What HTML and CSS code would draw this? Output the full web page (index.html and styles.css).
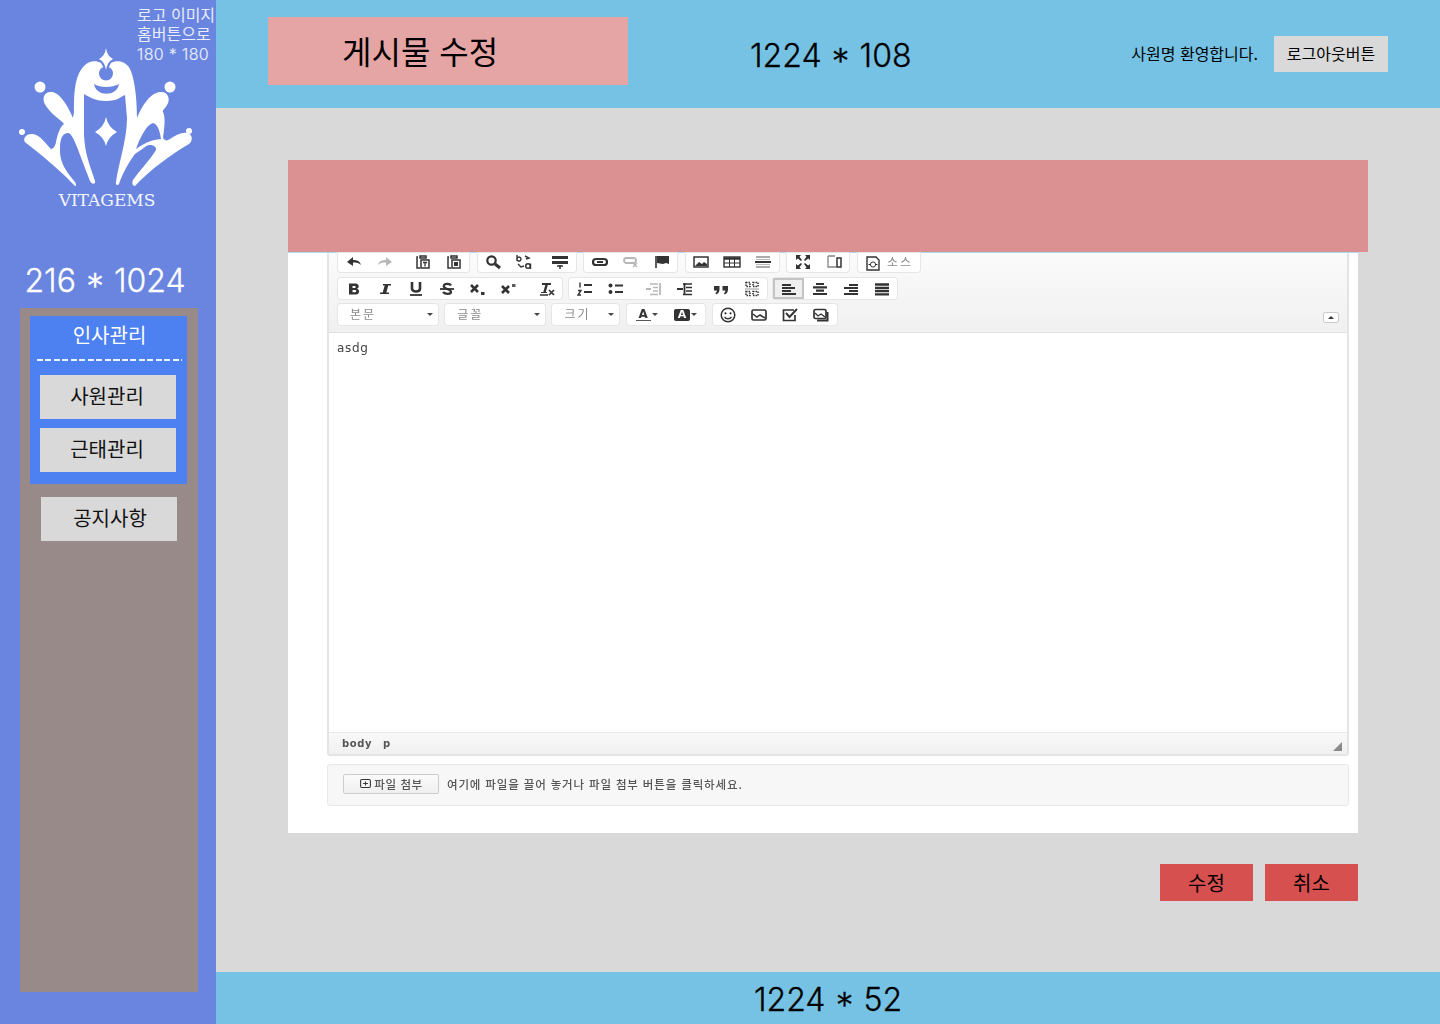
FILE: index.html
```html
<!DOCTYPE html>
<html lang="ko">
<head>
<meta charset="utf-8">
<title>게시물 수정</title>
<link rel="stylesheet" href="styles.css">
</head>
<body>
<svg class="sprite" xmlns="http://www.w3.org/2000/svg">
  <symbol id="i-undo" viewBox="0 0 16 16"><path d="M1 8l6-5v3c4 0 7 1 8 5-2-2-4-2.500-8-2.500V12z" fill="currentColor"/></symbol>
  <symbol id="i-redo" viewBox="0 0 16 16"><path d="M15 8L9 3v3C5 6 2 7 1 11c2-2 4-2.500 8-2.500V12z" fill="currentColor"/></symbol>
  <symbol id="i-paste" viewBox="0 0 16 16"><path d="M3 3H2v11h3M5 2h6v2H5zM6 6h8v8H6z" fill="none" stroke="currentColor" stroke-width="1.500"/><path d="M8 8.500h4M10 8.500v4" stroke="currentColor" stroke-width="1.300"/></symbol>
  <symbol id="i-paste2" viewBox="0 0 16 16"><path d="M3 3H2v11h3M5 2h6v2H5zM6 6h8v8H6z" fill="none" stroke="currentColor" stroke-width="1.500"/><path d="M8 8h4v4H8z" fill="currentColor"/></symbol>
  <symbol id="i-find" viewBox="0 0 16 16"><circle cx="6.500" cy="6.500" r="4.200" fill="none" stroke="currentColor" stroke-width="2.200"/><path d="M10 10l5 4" stroke="currentColor" stroke-width="3"/></symbol>
  <symbol id="i-replace" viewBox="0 0 16 16"><path d="M1 1v6M1 5a2 2 0 1 1 0 .1M9 2l4 2-3 1M2 10l3 3 3-1" fill="none" stroke="currentColor" stroke-width="1.400"/><circle cx="12" cy="12" r="2.300" fill="none" stroke="currentColor" stroke-width="1.500"/><path d="M14.500 9.500V15" stroke="currentColor" stroke-width="1.400"/></symbol>
  <symbol id="i-select" viewBox="0 0 16 16"><path d="M0 2h16v3H0zM0 7h16v3H0z" fill="currentColor"/><path d="M5 12h6M8 11v4" stroke="currentColor" stroke-width="1.500"/></symbol>
  <symbol id="i-link" viewBox="0 0 16 16"><rect x="1" y="5" width="14" height="6" rx="3" fill="none" stroke="currentColor" stroke-width="2.200"/><path d="M5 8h6" stroke="currentColor" stroke-width="2"/></symbol>
  <symbol id="i-unlink" viewBox="0 0 16 16"><rect x="1" y="4" width="12" height="5" rx="2.500" fill="none" stroke="currentColor" stroke-width="1.800"/><path d="M10 9l4 4M14 9l-4 4" stroke="currentColor" stroke-width="1.500"/></symbol>
  <symbol id="i-flag" viewBox="0 0 16 16"><path d="M2 2v12" stroke="currentColor" stroke-width="1.600"/><path d="M3 2h12v8l-3-1-3 1-6-1z" fill="currentColor"/></symbol>
  <symbol id="i-image" viewBox="0 0 16 16"><rect x="1" y="3" width="14" height="10" fill="none" stroke="currentColor" stroke-width="1.500"/><path d="M2 12l4-4 3 2 2-2 3 2v2z" fill="currentColor"/></symbol>
  <symbol id="i-table" viewBox="0 0 18 16" preserveAspectRatio="none"><rect x="1" y="3" width="16" height="10" fill="none" stroke="currentColor" stroke-width="1.400"/><path d="M1 4.500h16" stroke="currentColor" stroke-width="2.500"/><path d="M1 9h16M6.500 3v10M11.500 3v10" stroke="currentColor"/></symbol>
  <symbol id="i-hr" viewBox="0 0 16 16"><path d="M1 3h14M1 13h14" stroke="currentColor" stroke-opacity=".55" stroke-width="1.500"/><path d="M0 8h16" stroke="currentColor" stroke-width="2"/><path d="M1 5.500h14M1 10.500h14" stroke="currentColor" stroke-opacity=".35"/></symbol>
  <symbol id="i-max" viewBox="0 0 16 16"><path d="M1 1h5L4.500 2.800 7 6 6 7 2.800 4.500 1 6zM15 1v5l-1.800-1.500L10 7 9 6l2.500-3.200L10 1zM1 15v-5l1.800 1.500L6 9l1 1-2.500 3.200L6 15zM15 15h-5l1.500-1.800L9 10l1-1 3.200 2.500L15 10z" fill="currentColor"/></symbol>
  <symbol id="i-blocks" viewBox="0 0 16 16"><path d="M2 2h7M2 2v11h8" fill="none" stroke="currentColor" stroke-opacity=".6" stroke-width="1.300"/><rect x="11" y="4" width="4" height="9" fill="none" stroke="currentColor" stroke-width="1.500"/></symbol>
  <symbol id="i-source" viewBox="0 0 16 16"><path d="M2 2h9l3 3v10H2z" fill="none" stroke="currentColor" stroke-width="1.400"/><circle cx="8" cy="9.500" r="2.600" fill="none" stroke="currentColor"/><path d="M3.500 9.500H6M10 9.500h2.500" stroke="currentColor"/></symbol>
  <symbol id="i-b" viewBox="0 0 16 16"><path d="M3 2.500h6.500c4 0 4 4.500 1.500 5.300 3 .7 3 5.700-1.300 5.700H3zM6.500 5v2h2.300c1.200 0 1.200-2 0-2zM6.500 9v2.200h2.800c1.300 0 1.300-2.200 0-2.200z" fill="currentColor" fill-rule="evenodd"/></symbol>
  <symbol id="i-i" viewBox="0 0 16 16"><path d="M6 3h8v1.500h-2.700l-2 7H12V13H3v-1.500h2.700l2-7H6z" fill="currentColor"/></symbol>
  <symbol id="i-u" viewBox="0 0 16 16"><path d="M4 1v6.500c0 4 8 4 8 0V1" fill="none" stroke="currentColor" stroke-width="2.600"/><path d="M2 14h12" stroke="currentColor" stroke-width="1.800"/></symbol>
  <symbol id="i-s" viewBox="0 0 16 16"><path d="M12 4.500C11 2.500 5 2 4.800 5.300 4.500 8 12 8 12 11c0 2.500-6 2.500-8 0" fill="none" stroke="currentColor" stroke-width="2.300"/><path d="M1 8h14" stroke="currentColor" stroke-width="1.800"/></symbol>
  <symbol id="i-sub" viewBox="0 0 16 16"><path d="M1 4l7 7M8 4l-7 7" stroke="currentColor" stroke-width="2.600"/><path d="M11 11h3.500v3H11z" fill="currentColor"/></symbol>
  <symbol id="i-sup" viewBox="0 0 16 16"><path d="M1 5l7 7M8 5l-7 7" stroke="currentColor" stroke-width="2.600"/><path d="M11 3h3.500v3H11z" fill="currentColor" fill-opacity=".8"/></symbol>
  <symbol id="i-tx" viewBox="0 0 16 16"><path d="M3 2h9v2H8.800L6.800 11H8v1H2v-1h2.300l2-7H3z" fill="currentColor"/><path d="M1 14h8" stroke="currentColor" stroke-width="1.500"/><path d="M10 9l5 5M15 9l-5 5" stroke="currentColor" stroke-width="1.700"/></symbol>
  <symbol id="i-ol" viewBox="0 0 16 16"><path d="M3 1.500v5M1 9.500h3l-3 4.500h3" fill="none" stroke="currentColor" stroke-width="1.400"/><path d="M7 4h8M7 11h8" stroke="currentColor" stroke-width="2.200"/></symbol>
  <symbol id="i-ul" viewBox="0 0 16 16"><circle cx="2.500" cy="4.500" r="2" fill="currentColor"/><circle cx="2.500" cy="11" r="2" fill="currentColor"/><path d="M7 4.500h8M7 11h8" stroke="currentColor" stroke-width="2.200"/></symbol>
  <symbol id="i-out" viewBox="0 0 16 16"><path d="M4 3h8M7 6.500h5M7 10h5M4 13.500h8" stroke="currentColor" stroke-width="1.600"/><path d="M0 8h5M14 2v12" stroke="currentColor" stroke-width="1.800"/></symbol>
  <symbol id="i-in" viewBox="0 0 16 16"><path d="M6 3h9M9 6.500h6M9 10h6M6 13.500h9" stroke="currentColor" stroke-width="1.600"/><path d="M0 8h6M7.500 2v12" stroke="currentColor" stroke-width="1.800"/></symbol>
  <symbol id="i-quote" viewBox="0 0 16 16"><path d="M1 5h5.500v3.500C6.500 11 5 13 3 13.500L2.500 12c1-.5 1.300-1.500 1.300-2.500H1zM9.500 5H15v3.500c0 2.500-1.500 4.500-3.500 5L11 12c1-.5 1.300-1.500 1.300-2.500H9.500z" fill="currentColor"/></symbol>
  <symbol id="i-div" viewBox="0 0 16 16"><path d="M2 1.500h4v4H2zM9 1.500h5v4H9zM2 10.500h4v4H2zM9 10.500h5v4H9z" fill="none" stroke="currentColor" stroke-dasharray="1.500 1" stroke-width="1.500"/><path d="M1 8h14" stroke="currentColor" stroke-opacity=".5"/></symbol>
  <symbol id="i-left" viewBox="0 0 16 16"><path d="M1 4h9M1 7h13M1 10h9M1 13h14" stroke="currentColor" stroke-width="2.200"/></symbol>
  <symbol id="i-center" viewBox="0 0 16 16"><path d="M4 3h8M1 6.300h14M4 9.700h8M1 13h14" stroke="currentColor" stroke-width="2.200"/></symbol>
  <symbol id="i-right" viewBox="0 0 16 16"><path d="M6 4h9M1 7h14M6 10h9M1 13h14" stroke="currentColor" stroke-width="2.200"/></symbol>
  <symbol id="i-just" viewBox="0 0 16 16"><path d="M1 3.500h14M1 6.800h14M1 10h14M1 13.300h14" stroke="currentColor" stroke-width="2.300"/></symbol>
  <symbol id="i-smile" viewBox="0 0 16 16"><circle cx="8" cy="8" r="6.800" fill="none" stroke="currentColor" stroke-width="1.500"/><circle cx="5.500" cy="6.300" r="1.100" fill="currentColor"/><circle cx="10.500" cy="6.300" r="1.100" fill="currentColor"/><path d="M4.500 9.800c1.500 2.500 5.500 2.500 7 0" fill="none" stroke="currentColor" stroke-width="1.400"/></symbol>
  <symbol id="i-pic" viewBox="0 0 16 16"><rect x="1" y="3" width="14" height="10" rx="1.500" fill="none" stroke="currentColor" stroke-width="1.700"/><path d="M2 7l4 3 3-2 5 3" fill="none" stroke="currentColor" stroke-width="1.500"/></symbol>
  <symbol id="i-check" viewBox="0 0 16 16"><path d="M13 8v5.500H1.500V3H12" fill="none" stroke="currentColor" stroke-width="1.700"/><path d="M4 6l3.500 4L15 2" fill="none" stroke="currentColor" stroke-width="1.900"/></symbol>
  <symbol id="i-gal" viewBox="0 0 16 16"><rect x="1" y="2.500" width="12" height="9" rx="1.500" fill="none" stroke="currentColor" stroke-width="1.700"/><path d="M2 6l3 3 3-2 4 3" fill="none" stroke="currentColor" stroke-width="1.300"/><path d="M14.500 5v8.500H4" fill="none" stroke="currentColor" stroke-width="2"/></symbol>
  <symbol id="i-clip" viewBox="0 0 16 16"><rect x="2" y="3" width="12" height="10" rx="1.500" fill="none" stroke="currentColor" stroke-width="1.300"/><path d="M5 8h6M8 5.500v5" stroke="currentColor" stroke-width="1.200"/></symbol>
</svg>

<div class="app">
  <aside class="sidebar">
    <a class="logo">
      <svg class="logo-mark" viewBox="0 0 216 216" xmlns="http://www.w3.org/2000/svg">
        <path class="logo-white" d="M106 72L101 63C96 60 88 61 84 66C74 76 74 96 74 112L73 118C68 106 60 93 52 92C44 91 41 99 46 106C51 114 60 119 64 124C60 127 58 133 56 142C55 147 53 149 51 149C46 144 40 135 33 134C25 133 22 140 26 143C38 152 60 170 75 186C77 186 76 184 75 182C70 175 59 165 60 148C60 138 63 133 68 133C73 133 78 150 90 181C92 185 96 184 95 181C90 165 85 155 84 135L84 94C88 96 94 101 106 101Z"/>
        <path class="logo-white" d="M106 72L111 63C116 60 124 61 128 66C134 73 137 96 137 118C142 106 150 93 160 92C168 91 171 99 167 105C165 109 162 110 163 112C166 118 164 130 163 138C165 141 167 141 170 139C176 135 182 132 187 133C193 134 193 141 189 144C170 155 150 170 135 186C132 186 132 182 133 180C140 170 150 160 156 150C157 146 150 143 145 147C142 149 138 152 135 154C127 165 122 175 119 184C118 186 115 185 116 182C118 165 127 140 127 118L125 95C120 97 118 101 106 101Z"/>
        <path class="logo-blue" d="M153 123C146 125 140 138 136 149C143 144 150 140 161 139C160 132 158 124 153 123Z"/>
        <circle class="logo-blue" cx="106" cy="73.500" r="7"/>
        <path class="logo-blue" d="M102 62H110L108 70H104Z"/>
        <path class="logo-blue" d="M94 84C100 88 112 88 119 84C117 97 96 97 94 84Z"/>
        <path class="logo-white" d="M106 48Q107 56 113 59Q107 62 106 70Q105 62 99 59Q105 56 106 48Z"/>
        <path class="logo-white" d="M106 117Q108 127 117 132Q108 137 106 146Q104 137 95 132Q104 127 106 117Z"/>
        <circle class="logo-white" cx="40" cy="87" r="5.500"/>
        <circle class="logo-white" cx="170" cy="87" r="5.500"/>
        <circle class="logo-white" cx="22" cy="132" r="3"/>
        <circle class="logo-white" cx="189" cy="131" r="3"/>
        <text class="logo-name" x="107" y="206" text-anchor="middle">VITAGEMS</text>
      </svg>
      <span class="logo-note">로고 이미지<br>홈버튼으로<br><span class="note-size">180 * 180</span></span>
    </a>
    <div class="side-size">216 * 1024</div>
    <nav class="menu">
      <div class="menu-group">
        <div class="menu-title">인사관리</div>
        <a class="menu-btn">사원관리</a>
        <a class="menu-btn">근태관리</a>
      </div>
      <a class="menu-btn menu-btn-solo">공지사항</a>
    </nav>
  </aside>

  <div class="content">
    <header class="topbar">
      <h1 class="page-title">게시물 수정</h1>
      <div class="top-size">1224 * 108</div>
      <div class="user">
        <span class="user-name">사원명 환영합니다.</span>
        <button class="logout">로그아웃버튼</button>
      </div>
    </header>

    <main class="main">
      <div class="red-bar"></div>
      <section class="panel">
        <div class="editor">
          <div class="toolbar">
            <div class="tb-row tb-row-1">
              <div class="tb-group">
                <span class="tb-btn"><svg class="ico"><use href="#i-undo"/></svg></span>
                <span class="tb-btn dim"><svg class="ico"><use href="#i-redo"/></svg></span>
                <span class="tb-sep"></span>
                <span class="tb-btn"><svg class="ico"><use href="#i-paste"/></svg></span>
                <span class="tb-btn"><svg class="ico"><use href="#i-paste2"/></svg></span>
              </div>
              <div class="tb-group">
                <span class="tb-btn"><svg class="ico"><use href="#i-find"/></svg></span>
                <span class="tb-btn"><svg class="ico"><use href="#i-replace"/></svg></span>
                <span class="tb-sep tb-sep-5"></span>
                <span class="tb-btn"><svg class="ico"><use href="#i-select"/></svg></span>
              </div>
              <div class="tb-group">
                <span class="tb-btn"><svg class="ico"><use href="#i-link"/></svg></span>
                <span class="tb-btn dim"><svg class="ico"><use href="#i-unlink"/></svg></span>
                <span class="tb-btn"><svg class="ico"><use href="#i-flag"/></svg></span>
              </div>
              <div class="tb-group">
                <span class="tb-btn"><svg class="ico"><use href="#i-image"/></svg></span>
                <span class="tb-btn"><svg class="ico ico-wide"><use href="#i-table"/></svg></span>
                <span class="tb-btn"><svg class="ico"><use href="#i-hr"/></svg></span>
              </div>
              <div class="tb-group">
                <span class="tb-btn"><svg class="ico"><use href="#i-max"/></svg></span>
                <span class="tb-btn"><svg class="ico"><use href="#i-blocks"/></svg></span>
              </div>
              <div class="tb-group tb-group-source">
                <svg class="ico"><use href="#i-source"/></svg>
                <span class="tb-label">소스</span>
              </div>
            </div>
            <div class="tb-row tb-row-2">
              <div class="tb-group">
                <span class="tb-btn"><svg class="ico"><use href="#i-b"/></svg></span>
                <span class="tb-btn"><svg class="ico"><use href="#i-i"/></svg></span>
                <span class="tb-btn"><svg class="ico"><use href="#i-u"/></svg></span>
                <span class="tb-btn"><svg class="ico"><use href="#i-s"/></svg></span>
                <span class="tb-btn"><svg class="ico"><use href="#i-sub"/></svg></span>
                <span class="tb-btn"><svg class="ico"><use href="#i-sup"/></svg></span>
                <span class="tb-sep"></span>
                <span class="tb-btn"><svg class="ico"><use href="#i-tx"/></svg></span>
              </div>
              <div class="tb-group tb-group-lists">
                <span class="tb-btn"><svg class="ico"><use href="#i-ol"/></svg></span>
                <span class="tb-btn"><svg class="ico"><use href="#i-ul"/></svg></span>
                <span class="tb-sep"></span>
                <span class="tb-btn dim"><svg class="ico"><use href="#i-out"/></svg></span>
                <span class="tb-btn"><svg class="ico"><use href="#i-in"/></svg></span>
                <span class="tb-sep tb-sep-5"></span>
                <span class="tb-btn"><svg class="ico"><use href="#i-quote"/></svg></span>
                <span class="tb-btn"><svg class="ico"><use href="#i-div"/></svg></span>
              </div>
              <div class="tb-group">
                <span class="tb-btn is-active"><svg class="ico"><use href="#i-left"/></svg></span>
                <span class="tb-btn"><svg class="ico"><use href="#i-center"/></svg></span>
                <span class="tb-btn"><svg class="ico"><use href="#i-right"/></svg></span>
                <span class="tb-btn"><svg class="ico"><use href="#i-just"/></svg></span>
              </div>
            </div>
            <div class="tb-row tb-row-3">
              <div class="tb-group combo combo-l"><span class="combo-text">본문</span><i class="caret"></i></div>
              <div class="tb-group combo combo-l"><span class="combo-text">글꼴</span><i class="caret"></i></div>
              <div class="tb-group combo combo-s"><span class="combo-text">크기</span><i class="caret"></i></div>
              <div class="tb-group">
                <span class="tb-color"><span class="color-a">A</span><i class="caret caret-mini"></i></span>
                <span class="tb-color"><span class="color-b">A</span><i class="caret caret-mini"></i></span>
              </div>
              <div class="tb-group">
                <span class="tb-btn"><svg class="ico"><use href="#i-smile"/></svg></span>
                <span class="tb-btn"><svg class="ico"><use href="#i-pic"/></svg></span>
                <span class="tb-btn"><svg class="ico"><use href="#i-check"/></svg></span>
                <span class="tb-btn"><svg class="ico"><use href="#i-gal"/></svg></span>
              </div>
              <span class="tb-collapse"><i class="caret caret-up"></i></span>
            </div>
          </div>
          <div class="edit-area">asdg</div>
          <div class="edit-path"><span>body</span><span>p</span><i class="resize"></i></div>
        </div>
        <div class="attach">
          <span class="attach-btn"><svg class="ico ico-clip"><use href="#i-clip"/></svg>파일 첨부</span>
          <span class="attach-msg">여기에 파일을 끌어 놓거나 파일 첨부 버튼을 클릭하세요.</span>
        </div>
      </section>
      <div class="actions">
        <button class="action">수정</button>
        <button class="action">취소</button>
      </div>
    </main>

    <footer class="footer">1224 * 52</footer>
  </div>
</div>
</body>
</html>
```
FILE: styles.css
```css
* { box-sizing: border-box; }
html, body { margin: 0; height: 100%; }
body {
  font-family: "Noto Sans CJK KR", "Inter", sans-serif;
  color: #000;
  overflow: hidden;
}
.sprite { display: none; }

.app {
  display: grid;
  grid-template-columns: 216px 1fr;
  width: 1440px;
  height: 1024px;
}

/* Sidebar */
.sidebar {
  background: #6a85e0;
  display: flex;
  flex-direction: column;
  height: 1024px;
}
.logo {
  display: block;
  position: relative;
  height: 216px;
}
.logo-mark { display: block; width: 216px; height: 216px; }
.logo-white { fill: #fff; }
.logo-blue { fill: #6a85e0; }
.logo-name {
  fill: #f4f6fe;
  font-family: "DejaVu Serif", serif;
  font-size: 17px;
}
.logo-note {
  position: absolute;
  left: 137px;
  top: 5px;
  color: #e9eefc;
  font-family: "Noto Sans CJK KR", sans-serif;
  font-size: 16px;
  line-height: 19.400px;
  white-space: nowrap;
}
.note-size {
  font-family: "Inter", sans-serif;
  font-weight: 300;
  letter-spacing: .35px;
  -webkit-text-stroke: .15px #e9eefc;
}
.side-size {
  color: #fff;
  font-family: "Inter", sans-serif;
  font-weight: 300;
  font-size: 32px;
  -webkit-text-stroke: .3px #fff;
  line-height: 40px;
  margin-top: 45px;
  width: 210px;
  text-align: center;
}
.menu {
  margin: 7px 18px 0 20px;
  height: 684px;
  background: #998a8a;
  padding-top: 8px;
}
.menu-group {
  margin: 0 11px 0 10px;
  height: 168px;
  background: #4d80f0;
  display: flex;
  flex-direction: column;
  align-items: flex-start;
}
.menu-title {
  align-self: stretch;
  margin: 0 5px 0 7px;
  height: 45px;
  background: repeating-linear-gradient(90deg, #eef3ff 0 6px, transparent 6px 8.500px) bottom / 100% 2px no-repeat;
  color: #fff;
  font-size: 20px;
  line-height: 37px;
  text-align: center;
}
.menu-btn {
  display: block;
  width: 136px;
  height: 44px;
  margin: 14px 0 0 10px;
  padding-right: 2px;
  background: #d9d9d9;
  color: #111;
  font-size: 20px;
  line-height: 42px;
  text-align: center;
}
.menu-btn + .menu-btn { margin-top: 9px; }
.menu-btn-solo { margin: 13px 0 0 21px; padding: 0 0 0 2px; }

/* Main column */
.content {
  display: flex;
  flex-direction: column;
  height: 1024px;
  min-width: 0;
}
.topbar {
  height: 108px;
  flex: none;
  background: #76c2e4;
  display: flex;
  align-items: center;
  padding: 0 52px;
}
.page-title {
  align-self: flex-start;
  width: 360px;
  height: 68px;
  margin: 17px 0 0;
  padding-left: 74px;
  background: #e6a5a5;
  font-size: 32px;
  font-weight: 400;
  line-height: 66px;
}
.top-size, .footer {
  font-family: "Inter", sans-serif;
  font-weight: 300;
  font-size: 32px;
  -webkit-text-stroke: .3px #000;
  line-height: 40px;
}
.top-size { margin: 3px 0 0 122px; }
.user {
  margin-left: auto;
  display: flex;
  align-items: center;
  gap: 16px;
  font-size: 16px;
}
.user-name { padding-bottom: 2px; }
.logout {
  width: 114px;
  height: 36px;
  border: 0;
  background: #d9d9d9;
  color: #000;
  font: inherit;
  padding: 0 0 2px;
}
.main {
  flex: 1;
  background: #d9d9d9;
  padding: 52px 0 0 72px;
}
.red-bar {
  width: 1080px;
  height: 92px;
  background: #db9191;
}
.panel {
  width: 1070px;
  height: 581px;
  background: #fff;
  border-top: 1px solid #a8dcef;
  padding: 0 9px 0 39px;
}
.footer {
  height: 52px;
  flex: none;
  background: #76c2e4;
  text-align: center;
  line-height: 56px;
}
.actions {
  width: 1070px;
  margin-top: 31px;
  display: flex;
  justify-content: flex-end;
  gap: 12px;
}
.action {
  width: 93px;
  height: 37px;
  border: 0;
  padding: 0;
  background: #d75050;
  color: #000;
  font: 20px "Noto Sans CJK KR", sans-serif;
}

/* Editor picture */
.editor {
  filter: blur(0.6px);
  border: solid #e4e4e4;
  border-width: 0 2px 2px;
  border-radius: 0 0 3px 3px;
  height: 503px;
  display: flex;
  flex-direction: column;
  color: #444;
}
.toolbar {
  height: 80px;
  flex: none;
  background: linear-gradient(#fbfbfb, #f0f0f0);
  border-bottom: 1px solid #e2e2e2;
  padding-left: 9px;
}
.tb-row {
  display: flex;
  gap: 8.600px;
}
.tb-row-1 { height: 19px; }
.tb-row-2 { margin-top: 6px; gap: 7px; }
.tb-row-2 .tb-group-lists { margin-right: -1px; }
.tb-row-3 { margin-top: 5px; align-items: flex-start; gap: 7.700px; }
.tb-group {
  display: flex;
  align-items: center;
  height: 21px;
  background: #fff;
  box-shadow: 0 0 0 1px #e6e6e6;
  border-radius: 3px;
}
.tb-row-1 .tb-group { height: 19px; border-radius: 0 0 3px 3px; }
.tb-row-1 .tb-btn { padding-bottom: 1px; }
.tb-btn {
  width: 31px;
  height: 100%;
  display: flex;
  align-items: center;
  justify-content: center;
}
.tb-btn.dim { opacity: .35; }
.tb-btn.is-active {
  background: #efefef;
  box-shadow: inset 0 0 0 2px #c4c4c4;
}
.tb-sep { width: 7px; }
.tb-sep-5 { width: 5px; }
.ico { width: 16px; height: 16px; display: block; color: #333; }
.ico-wide { width: 18px; }
.tb-group-source {
  width: 62px;
  padding-left: 7px;
  gap: 6px;
}
.tb-label, .combo-text {
  font-size: 12px;
  line-height: 14px;
  color: #8a8a8a;
  letter-spacing: 2px;
  padding-bottom: 2px;
}
.combo {
  padding: 0 5px 0 12px;
  justify-content: space-between;
}
.combo-l { width: 99.500px; }
.combo-s { width: 67px; }
.caret {
  width: 0;
  height: 0;
  border: 3px solid transparent;
  border-top: 3px solid #444;
  border-bottom: 0;
  display: block;
}
.tb-color {
  width: 39px;
  display: flex;
  align-items: center;
  justify-content: center;
  gap: 1px;
  height: 100%;
}
.color-a {
  font: bold 12px "DejaVu Sans", sans-serif;
  color: #333;
  border-bottom: 1px solid #555;
  line-height: 11px;
  width: 15px;
  text-align: center;
}
.color-b {
  font: bold 11px "DejaVu Sans", sans-serif;
  color: #fff;
  background: #333;
  border-radius: 2px;
  width: 16px;
  line-height: 12px;
  text-align: center;
}
.tb-collapse {
  margin: 8px 8px 0 auto;
  width: 16px;
  height: 11px;
  background: #fff;
  border: 1px solid #ccc;
  border-radius: 2px;
  display: flex;
  align-items: center;
  justify-content: center;
}
.caret-up { border-top: 0; border-bottom: 3px solid #333; }
.edit-area {
  flex: 1;
  background: #fff;
  padding: 7px 8px;
  font: 12px/16px "DejaVu Sans", sans-serif;
  letter-spacing: .7px;
  color: #444;
}
.edit-path {
  position: relative;
  height: 22px;
  flex: none;
  background: linear-gradient(#f9f9f9, #f0f0f0);
  border-top: 1px solid #e8e8e8;
  padding-left: 13px;
  display: flex;
  align-items: center;
  gap: 11px;
  font: bold 10px "DejaVu Sans", sans-serif;
  letter-spacing: .6px;
  color: #555;
}
.resize {
  position: absolute;
  right: 5px;
  bottom: 3px;
  width: 0;
  height: 0;
  border-style: solid;
  border-width: 0 0 9px 9px;
  border-color: transparent transparent #8a8a8a transparent;
}
.attach {
  filter: blur(0.6px);
  margin-top: 8px;
  height: 42px;
  background: #f7f7f7;
  border: 1px solid #e8e8e8;
  border-radius: 3px;
  display: flex;
  align-items: center;
  padding: 0 0 3px 15px;
  gap: 8px;
}
.attach-btn {
  width: 96px;
  height: 20px;
  background: linear-gradient(#fbfbfb, #efefef);
  border: 1px solid #ccc;
  border-radius: 2px;
  display: flex;
  align-items: center;
  justify-content: center;
  gap: 2px;
  font-size: 11.500px;
  font-weight: 500;
  color: #555;
  letter-spacing: .6px;
}
.ico-clip { width: 13px; height: 13px; }
.attach-msg {
  font-size: 11.500px;
  font-weight: 500;
  color: #555;
  letter-spacing: .85px;
}
```
